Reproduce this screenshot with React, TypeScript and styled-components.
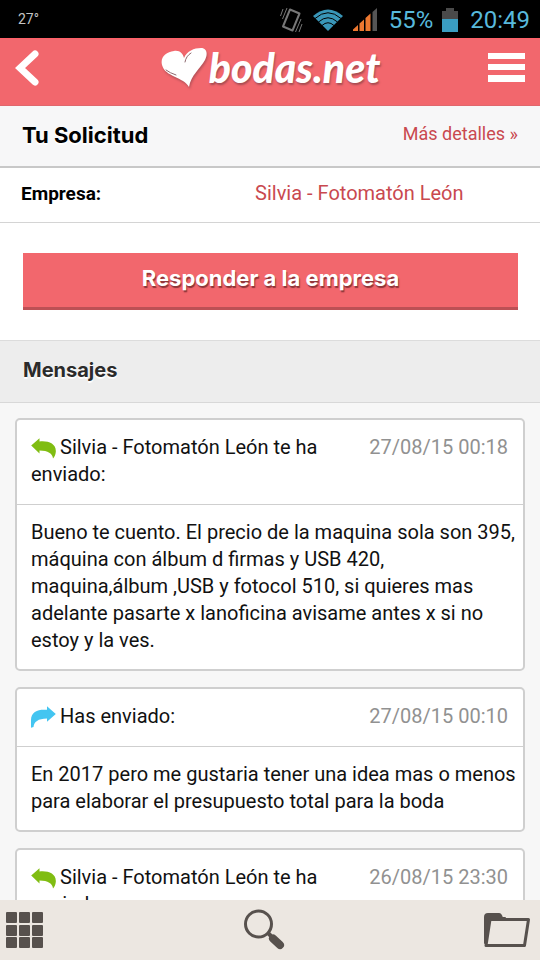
import React from "react";
import styled, { createGlobalStyle } from "styled-components";

const Global = createGlobalStyle`
  *, *::before, *::after { box-sizing: border-box; }
  body { margin: 0; background: #f7f7f7; }
  button { font: inherit; border: 0; padding: 0; background: none; cursor: pointer; }
  h1, h2, p, dl, dd, dt { margin: 0; }
`;

const Screen = styled.div`
  display: flex;
  flex-direction: column;
  height: 100vh;
  overflow: hidden;
  font-family: Roboto, "Liberation Sans", sans-serif;
  font-size: 20px;
  line-height: 27px;
  color: #111;
`;

const StatusBar = styled.div`
  display: flex;
  align-items: center;
  flex: none;
  height: 38px;
  padding: 1px 10px 0 18px;
  gap: 9px;
  background: #000;
  color: #58b9dc;
  font-size: 24px;
  svg { flex: none; display: block; }
`;

const Temperature = styled.span`
  margin-right: auto;
  font-size: 14px;
  color: #c4c4c4;
`;

const StatusText = styled.span`
  padding: 1px 0 0 3px;
`;

const Header = styled.header`
  display: flex;
  align-items: center;
  justify-content: space-between;
  flex: none;
  height: 68px;
  padding: 0 15px 8px;
  background: #f2676d;
  border-top: 1px solid #ff5f68;
  border-bottom: 1px solid #e0676d;
`;

const IconButton = styled.button`
  display: flex;
  align-items: center;
  svg { display: block; }
`;

const Logo = styled.a`
  display: flex;
  align-items: center;
  gap: 2px;
  color: #fff;
  text-decoration: none;
  font-family: Lato, sans-serif;
  font-size: 41px;
  line-height: 48px;
  font-weight: 900;
  font-style: italic;
  text-shadow: 1px 2px 2px #a84c52;
  svg { display: block; filter: drop-shadow(1px 2px 1px #b85259); }
`;

const Content = styled.main`
  flex: 1;
  min-height: 0;
  overflow-y: auto;
  scrollbar-width: none;
`;

const TitleBar = styled.section`
  display: flex;
  justify-content: space-between;
  padding: 14px 22px 17px;
  background: #f7f7f8;
  border-bottom: 2px solid #c8c8c8;
`;

const Title = styled.h1`
  padding-top: 2px;
  font-family: Inter, sans-serif;
  font-size: 22px;
  line-height: 27px;
  font-weight: 700;
  color: #000;
  text-shadow: 0 2px 1px #fff;
`;

const RedLink = styled.a`
  color: #c9494f;
  text-decoration: none;
`;

const MoreLink = styled(RedLink)`
  font-size: 18px;
`;

const Details = styled.dl`
  display: grid;
  grid-template-columns: 47fr 53fr;
  padding: 12px 21px 15px;
  background: #fff;
  border-bottom: 1px solid #d4d4d4;
`;

const DetailLabel = styled.dt`
  font-size: 19px;
  font-weight: 700;
  color: #000;
`;

const ReplyArea = styled.div`
  padding: 30px 22px 30px 23px;
  background: #fff;
`;

const ReplyButton = styled.button`
  display: block;
  width: 100%;
  height: 57px;
  padding-bottom: 3px;
  background: #f2676d;
  border-bottom: 3px solid #bc5055;
  color: #fff;
  font-family: Inter, sans-serif;
  font-size: 22px;
  font-weight: 700;
  text-shadow: 1px 2px 1px #8c3438;
`;

const SectionTitle = styled.h2`
  padding: 16px 23px 18px;
  background: #ededed;
  border-top: 1px solid #dcdcdc;
  border-bottom: 1px solid #d8d8d8;
  font-family: Inter, sans-serif;
  font-size: 20px;
  line-height: 27px;
  font-weight: 700;
  color: #2b2b2b;
  text-shadow: 0 2px 1px #fff;
`;

const MessageList = styled.div`
  display: flex;
  flex-direction: column;
  gap: 16px;
  padding: 15px;
  background: #f7f7f7;
`;

const Card = styled.article`
  background: #fff;
  border: 2px solid #cfcfcf;
  border-radius: 5px;
`;

const CardHeader = styled.header`
  display: flex;
  justify-content: space-between;
  gap: 40px;
  padding: 14px 15px 16px 14px;
  border-bottom: 1px solid #cfcfcf;
  svg { vertical-align: -5px; margin-right: 4px; }
`;

const DateText = styled.time`
  flex: none;
  color: #919191;
`;

const CardBody = styled.p`
  padding: 14px 4px 15px 14px;
  white-space: pre-line;
`;

const BottomBar = styled.nav`
  display: flex;
  align-items: center;
  justify-content: space-between;
  flex: none;
  height: 60px;
  padding: 0 9px 0 5px;
  background: #ece7e1;
`;

const ReceivedIcon = () => (
  <svg width="25" height="21" viewBox="0 0 25 21" aria-hidden="true">
    <path d="M0.200 7.500 8.500 0.200V3.500C17 2.500 25.500 5.500 24.800 14C24.500 17 23.500 19 22 20.500C21.500 15.500 17 12.500 8.500 12.500V15.500Z" fill="#80bd12" />
  </svg>
);

const SentIcon = () => (
  <svg width="25" height="22" viewBox="0 0 25 22" aria-hidden="true">
    <path d="M24.800 8 16 0.300V3.800C8 3 0 5 0 14V21.800L2.500 21C3 16 7 12.500 16 12.500V15.800Z" fill="#43c5f1" />
  </svg>
);

type Message = { from?: string; sent: boolean; date: string; body: string };

const messages: Message[] = [
  {
    from: "Silvia - Fotomatón León",
    sent: false,
    date: "27/08/15 00:18",
    body: "Bueno te cuento. El precio de la maquina sola son 395,\nmáquina con álbum d firmas y USB 420,\nmaquina,álbum ,USB y fotocol 510, si quieres mas\nadelante pasarte x lanoficina avisame antes x si no\nestoy y la ves.",
  },
  {
    sent: true,
    date: "27/08/15 00:10",
    body: "En 2017 pero me gustaria tener una idea mas o menos\npara elaborar el presupuesto total para la boda",
  },
  { from: "Silvia - Fotomatón León", sent: false, date: "26/08/15 23:30", body: "" },
];

const MessageCard = ({ message }: { message: Message }) => (
  <Card>
    <CardHeader>
      <p>
        {message.sent ? <SentIcon /> : <ReceivedIcon />}
        {message.sent ? "Has enviado:" : `${message.from} te ha enviado:`}
      </p>
      <DateText>{message.date}</DateText>
    </CardHeader>
    {message.body && <CardBody>{message.body}</CardBody>}
  </Card>
);

const VibrateIcon = () => (
  <svg width="24" height="26" viewBox="0 0 24 26" fill="none" stroke="#777">
    <path d="M11 2.500 20.500 6.500 13.500 23.500 4 19.500Z" strokeWidth="2" strokeLinejoin="round" />
    <path d="M1.500 9 4 2M3.500 12 8 1M16.500 25 22 12M20 25 23 17" strokeWidth="1" />
  </svg>
);

const WifiIcon = () => (
  <svg width="32" height="24" viewBox="0 0 32 24">
    <path d="M1 8Q16-5 31 8L16 23Z" fill="#3996b8" />
    <path d="M3 10.500Q16-1 29 10.500M6.500 14Q16 5.500 25.500 14M10 17.500Q16 12 22 17.500" fill="none" stroke="#000" strokeWidth="1" />
  </svg>
);

const SignalIcon = () => (
  <svg width="24" height="23" viewBox="0 0 24 23">
    <path d="M0 23V21.500L5 17V23ZM6.500 23V15.500L11 11.500V23ZM12.500 23V10L17.500 5.500V23Z" fill="#ed7830" />
    <path d="M19.500 23V4L24 0V23Z" fill="#555" />
  </svg>
);

const BatteryIcon = () => (
  <svg width="16" height="24" viewBox="0 0 16 24">
    <path d="M0 3H4V0H12V3H16V12H0Z" fill="#4a4a4a" />
    <path d="M0 11H16V24H0Z" fill="#3a9dc1" />
  </svg>
);

const HeartIcon = () => (
  <svg width="46" height="42" viewBox="0 0 46 42">
    <path d="M28 40C23 30 4 30 1 18C-1 10 5 5 13 4C19 3 22 7 23 11C26 4 33 1 40 1C46 1 47 7 44 13C39 22 30 28 28 40Z" fill="#fff" />
    <path d="M5 23Q9 26 15 28M24 15Q25 9 30 6" fill="none" stroke="#8e6a70" strokeWidth="1" strokeLinecap="round" />
  </svg>
);

const App = () => (
  <Screen>
    <Global />
    <StatusBar>
      <Temperature>27°</Temperature>
      <VibrateIcon />
      <WifiIcon />
      <SignalIcon />
      <StatusText>55%</StatusText>
      <BatteryIcon />
      <StatusText>20:49</StatusText>
    </StatusBar>
    <Header>
      <IconButton type="button" aria-label="Volver">
        <svg width="38" height="40" viewBox="0 0 38 40">
          <path d="M20 6 5 20 20 34" fill="none" stroke="#fff" strokeWidth="7" strokeLinecap="round" />
        </svg>
      </IconButton>
      <Logo href="#inicio">
        <HeartIcon />
        bodas.net
      </Logo>
      <IconButton type="button" aria-label="Menú">
        <svg width="37" height="36" viewBox="0 0 37 36" fill="#fff">
          <rect y="3" width="37" height="6" />
          <rect y="14" width="37" height="6" />
          <rect y="25" width="37" height="7" />
        </svg>
      </IconButton>
    </Header>
    <Content>
      <TitleBar>
        <Title>Tu Solicitud</Title>
        <MoreLink href="#detalles">Más detalles »</MoreLink>
      </TitleBar>
      <Details>
        <DetailLabel>Empresa:</DetailLabel>
        <dd>
          <RedLink href="#empresa">Silvia - Fotomatón León</RedLink>
        </dd>
      </Details>
      <ReplyArea>
        <ReplyButton type="button">Responder a la empresa</ReplyButton>
      </ReplyArea>
      <SectionTitle>Mensajes</SectionTitle>
      <MessageList>
        {messages.map((message) => (
          <MessageCard key={message.date} message={message} />
        ))}
      </MessageList>
    </Content>
    <BottomBar aria-label="Navegación">
      <IconButton type="button" aria-label="Aplicaciones">
        <svg width="39" height="38" viewBox="0 0 39 38" fill="#57514d">
          {[1, 14, 27].map((x) => [1, 14, 26].map((y) => <rect key={`${x}-${y}`} x={x} y={y} width="11" height="11" rx="1" />))}
        </svg>
      </IconButton>
      <IconButton type="button" aria-label="Buscar">
        <svg width="42" height="42" viewBox="0 0 42 42" fill="none" stroke="#57514d">
          <circle cx="15.500" cy="15" r="13" strokeWidth="3" />
          <path d="M25 24 28 27" strokeWidth="4" />
          <path d="M30 29.500 37 36" strokeWidth="8" strokeLinecap="round" />
        </svg>
      </IconButton>
      <IconButton type="button" aria-label="Carpeta">
        <svg width="48" height="36" viewBox="0 0 48 36">
          <path d="M2 31V5Q2 2 5 2H16Q18 2 19 6H22V9H8L5 32Z" fill="#57514d" stroke="#57514d" strokeWidth="2" strokeLinejoin="round" />
          <path d="M7 7.500H45.500L41.500 33.500H3Z" fill="#ece7e1" stroke="#57514d" strokeWidth="3" strokeLinejoin="round" />
        </svg>
      </IconButton>
    </BottomBar>
  </Screen>
);

export default App;
